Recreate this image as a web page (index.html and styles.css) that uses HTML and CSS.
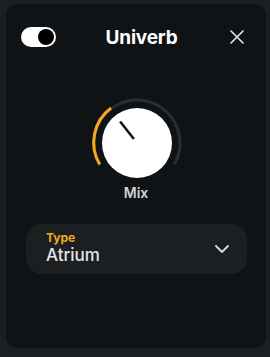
FILE: index.html
```html
<!DOCTYPE html>
<html>
<head>
<meta charset="utf-8">
<link rel="stylesheet" href="styles.css">
</head>
<body>
<div class="panel">
  <div class="header">
    <div class="toggle"><div class="toggle-knob"></div></div>
    <div class="title">Univerb</div>
    <div class="close">
      <svg width="14" height="14" viewBox="0 0 14 14"><path d="M1 1 L13 13 M13 1 L1 13" stroke="#e6e8ea" stroke-width="1.6" stroke-linecap="round" fill="none"/></svg>
    </div>
  </div>
  <div class="knob-wrap">
    <svg class="knob" width="96" height="96" viewBox="0 0 96 96">
      <path d="M 10.76 69.5 A 43 43 0 1 1 85.24 69.5" stroke="#2a2e34" stroke-width="3" fill="none"/>
      <path d="M 10.76 69.5 A 43 43 0 0 1 22.02 13.02" stroke="#f5a81c" stroke-width="3" fill="none"/>
      <circle cx="48" cy="48" r="35" fill="#ffffff"/>
      <path d="M 44.9 44.1 L 31.1 26.4" stroke="#111417" stroke-width="2.5" stroke-linecap="butt"/>
    </svg>
    <div class="knob-label">Mix</div>
  </div>
  <div class="select">
    <div class="select-text">
      <div class="select-label">Type</div>
      <div class="select-value">Atrium</div>
    </div>
    <svg class="chevron" width="14" height="8" viewBox="0 0 14 8"><path d="M1 1 L7 7 L13 1" stroke="#d8dadd" stroke-width="1.8" fill="none" stroke-linecap="round" stroke-linejoin="round"/></svg>
  </div>
</div>
</body>
</html>
```
FILE: styles.css
```css
html, body {
  margin: 0;
  padding: 0;
}
body {
  background: #1b1f22;
  width: 270px;
  height: 357px;
  overflow: hidden;
  font-family: Inter, "Noto Sans", sans-serif;
}
.panel {
  margin: 4px 4px 0 6px;
  width: 260px;
  height: 344px;
  background: #101316;
  border-radius: 11px;
  box-sizing: border-box;
  padding: 19px 0 0 0;
}
.header {
  height: 28px;
  display: flex;
  align-items: center;
  justify-content: space-between;
  padding: 0 17px 0 15px;
}
.toggle {
  width: 35px;
  height: 20px;
  border-radius: 10px;
  background: #ffffff;
  display: flex;
  align-items: center;
  justify-content: flex-end;
  padding-right: 2px;
  box-sizing: border-box;
}
.toggle-knob {
  width: 16px;
  height: 16px;
  border-radius: 50%;
  background: #000000;
}
.title {
  color: #ffffff;
  font-weight: 700;
  font-size: 19px;
  letter-spacing: -0.2px;
  margin-left: 2px;
}
.close {
  width: 24px;
  height: 24px;
  display: flex;
  align-items: center;
  justify-content: center;
}
.knob-wrap {
  display: flex;
  flex-direction: column;
  align-items: center;
  margin-top: 44px;
}
.knob {
  display: block;
  margin-left: 1px;
}
.knob-label {
  color: #d2d5d8;
  font-weight: 600;
  font-size: 14px;
  margin-top: -7px;
  line-height: 17px;
}
.select {
  margin: 23px 19px 0 20px;
  height: 50px;
  background: #1b1f22;
  border-radius: 16px;
  display: flex;
  align-items: center;
  justify-content: space-between;
  padding: 0 18px 0 20px;
}
.select-text {
  display: flex;
  flex-direction: column;
  margin-top: -2px;
}
.select-label {
  color: #f5a81c;
  font-weight: 700;
  font-size: 12px;
  line-height: 14px;
}
.select-value {
  color: #e4e6e8;
  font-weight: 500;
  font-size: 17px;
  line-height: 20px;
}
.chevron {
  display: block;
}
```
